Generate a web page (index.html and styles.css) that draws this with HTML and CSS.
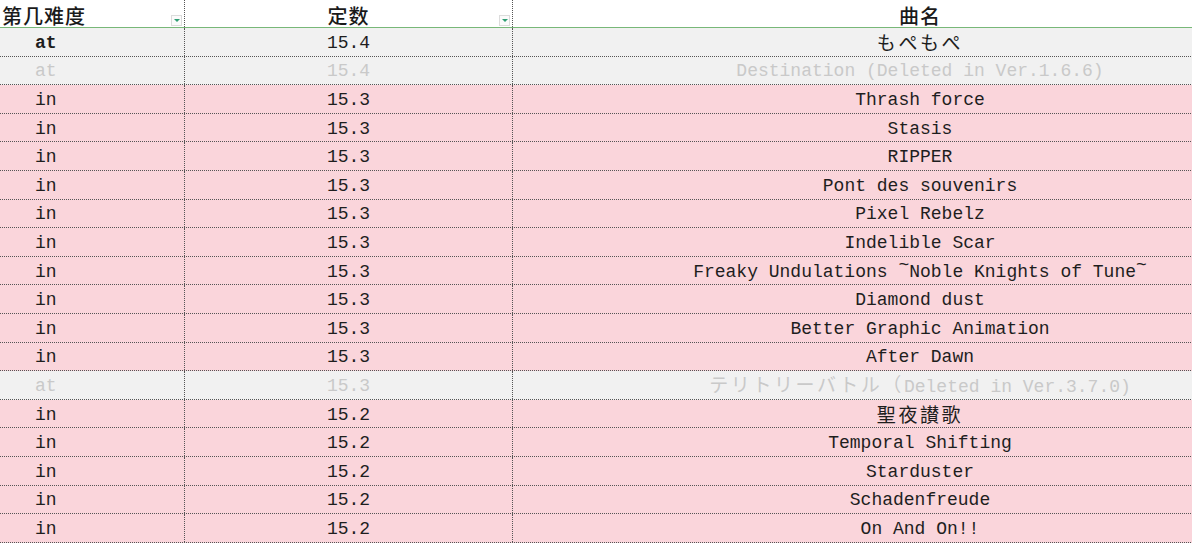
FILE: index.html
```html
<!DOCTYPE html>
<html lang="zh">
<head>
<meta charset="utf-8">
<title>Sheet</title>
<link rel="stylesheet" href="styles.css">
</head>
<body>
<div class="sheet">
  <div class="row head">
    <div class="cell ca"><span class="hd">第几难度</span><span class="filter"></span></div>
    <div class="cell cb"><span class="hd">定数</span><span class="filter"></span></div>
    <div class="cell cc"><span class="hd">曲名</span></div>
  </div>
  <div class="row grey">
    <div class="cell ca"><b>at</b></div><div class="cell cb">15.4</div><div class="cell cc"><span class="cjk solo">もぺもぺ</span></div>
  </div>
  <div class="row grey deleted">
    <div class="cell ca">at</div><div class="cell cb">15.4</div><div class="cell cc">Destination (Deleted in Ver.1.6.6)</div>
  </div>
  <div class="row pink"><div class="cell ca">in</div><div class="cell cb">15.3</div><div class="cell cc">Thrash force</div></div>
  <div class="row pink"><div class="cell ca">in</div><div class="cell cb">15.3</div><div class="cell cc">Stasis</div></div>
  <div class="row pink"><div class="cell ca">in</div><div class="cell cb">15.3</div><div class="cell cc">RIPPER</div></div>
  <div class="row pink"><div class="cell ca">in</div><div class="cell cb">15.3</div><div class="cell cc">Pont des souvenirs</div></div>
  <div class="row pink"><div class="cell ca">in</div><div class="cell cb">15.3</div><div class="cell cc">Pixel Rebelz</div></div>
  <div class="row pink"><div class="cell ca">in</div><div class="cell cb">15.3</div><div class="cell cc">Indelible Scar</div></div>
  <div class="row pink"><div class="cell ca">in</div><div class="cell cb">15.3</div><div class="cell cc"><span>Freaky Undulations <span class="tilde">~</span>Noble Knights of Tune<span class="tilde">~</span></span></div></div>
  <div class="row pink"><div class="cell ca">in</div><div class="cell cb">15.3</div><div class="cell cc">Diamond dust</div></div>
  <div class="row pink"><div class="cell ca">in</div><div class="cell cb">15.3</div><div class="cell cc">Better Graphic Animation</div></div>
  <div class="row pink"><div class="cell ca">in</div><div class="cell cb">15.3</div><div class="cell cc">After Dawn</div></div>
  <div class="row grey deleted">
    <div class="cell ca">at</div><div class="cell cb">15.3</div><div class="cell cc"><span><span class="cjk">テリトリーバトル（</span>Deleted in Ver.3.7.0)</span></div>
  </div>
  <div class="row pink"><div class="cell ca">in</div><div class="cell cb">15.2</div><div class="cell cc"><span class="cjk solo">聖夜讃歌</span></div></div>
  <div class="row pink"><div class="cell ca">in</div><div class="cell cb">15.2</div><div class="cell cc">Temporal Shifting</div></div>
  <div class="row pink"><div class="cell ca">in</div><div class="cell cb">15.2</div><div class="cell cc">Starduster</div></div>
  <div class="row pink"><div class="cell ca">in</div><div class="cell cb">15.2</div><div class="cell cc">Schadenfreude</div></div>
  <div class="row pink"><div class="cell ca">in</div><div class="cell cb">15.2</div><div class="cell cc">On And On!!</div></div>
</div>
</body>
</html>
```
FILE: styles.css
```css
html, body {
  margin: 0;
  padding: 0;
  overflow: hidden;
  background: #ffffff;
}

.sheet {
  display: flex;
  flex-direction: column;
  width: 1327px;
  font-family: "Liberation Mono", "Noto Sans CJK JP", monospace;
  font-size: 18px;
  line-height: 21px;
  color: #1e1e1e;
}

.row {
  display: grid;
  grid-template-columns: 185px 328px 814px;
  height: 28.6px;
  box-sizing: border-box;
  border-bottom: 1px dotted #555555;
}

.row.head {
  height: 28px;
  border-bottom: 1px solid #78b878;
  background: #ffffff;
}

.row.grey { background: #f1f1f1; }
.row.pink { background: #fad5db; }
.row.deleted { color: #c9c9c9; }

.cell {
  position: relative;
  display: flex;
  align-items: center;
  padding-top: 3px;
  box-sizing: border-box;
  white-space: nowrap;
  overflow: visible;
}

.ca {
  padding-left: 35px;
  border-right: 1px dotted #555555;
}

.cb {
  justify-content: center;
  border-right: 1px dotted #555555;
}

.cc {
  justify-content: center;
}

.head .ca { padding-left: 2px; }
.head .cell { padding-top: 3px; }

.hd {
  font-family: "Noto Sans CJK SC", sans-serif;
  font-weight: 500;
  font-size: 20px;
  letter-spacing: 1px;
  color: #1a1a1a;
}

.cjk {
  font-family: "Noto Sans CJK JP", sans-serif;
  font-size: 19px;
  line-height: 19px;
  letter-spacing: 2.6px;
  font-weight: 400;
}

.cjk.solo {
  margin-top: -4px;
}

.tilde {
  vertical-align: 0.4em;
  line-height: 0;
}

.filter {
  position: absolute;
  right: 2px;
  bottom: 1px;
  width: 11px;
  height: 11px;
  box-sizing: border-box;
  border: 1px solid #dcdcdc;
  background: #fbfbfb;
  display: flex;
  align-items: center;
  justify-content: center;
}

.filter::after {
  content: "";
  width: 0;
  height: 0;
  border-left: 3px solid transparent;
  border-right: 3px solid transparent;
  border-top: 3px solid #2f9e73;
}
```
